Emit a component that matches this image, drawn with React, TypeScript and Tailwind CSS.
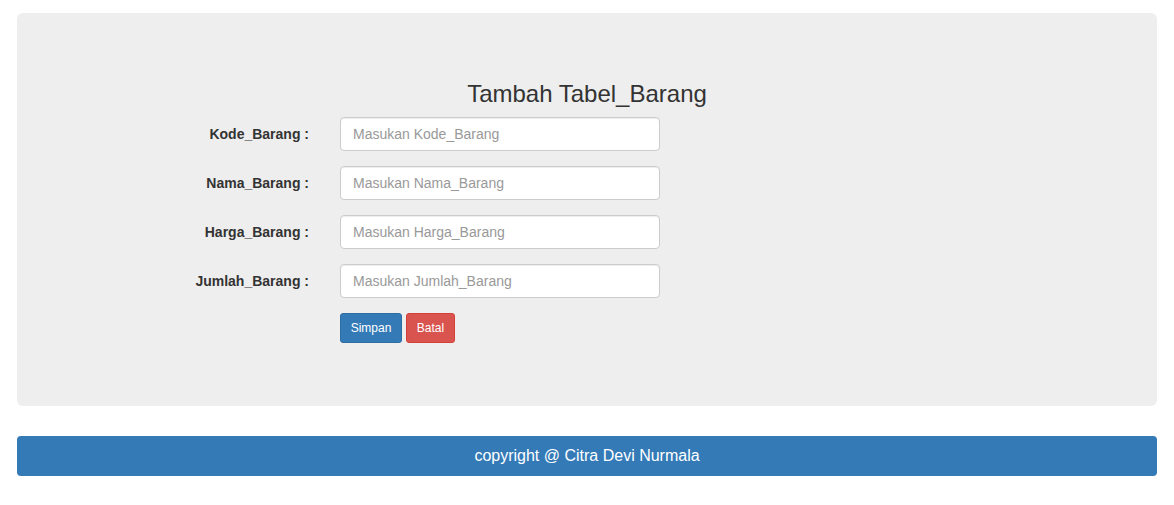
import { useState } from "react";

const fields = [
  { label: "Kode_Barang :", placeholder: "Masukan Kode_Barang" },
  { label: "Nama_Barang :", placeholder: "Masukan Nama_Barang" },
  { label: "Harga_Barang :", placeholder: "Masukan Harga_Barang" },
  { label: "Jumlah_Barang :", placeholder: "Masukan Jumlah_Barang" },
];

export default function App() {
  const [values, setValues] = useState<string[]>(["", "", "", ""]);

  return (
    <div
      className="min-h-screen bg-white px-[17px] pt-[13px] text-[14px] text-[#333]"
      style={{ fontFamily: '"Liberation Sans", Arial, sans-serif' }}
    >
      <div className="rounded-[6px] bg-[#eeeeee] pt-[68px] pb-[63px]">
        <h3 className="mb-[10px] text-center text-[24px] leading-[26px] font-normal text-[#333]">
          Tambah Tabel_Barang
        </h3>

        <form className="flex flex-col gap-[15px]" onSubmit={(e) => e.preventDefault()}>
          {fields.map((field, i) => (
            <div key={field.label} className="flex items-center">
              <label className="w-[292px] text-right font-bold leading-[20px]">
                {field.label}
              </label>
              <input
                type="text"
                value={values[i]}
                onChange={(e) => {
                  const next = [...values];
                  next[i] = e.target.value;
                  setValues(next);
                }}
                placeholder={field.placeholder}
                className="ml-[31px] h-[34px] w-[320px] rounded-[4px] border border-[#cccccc] bg-white px-[12px] text-[14px] text-[#555] shadow-[inset_0_1px_1px_rgba(0,0,0,0.075)] outline-none placeholder:text-[#999]"
              />
            </div>
          ))}

          <div className="flex gap-[4px] pl-[323px]">
            <button
              type="submit"
              className="h-[30px] w-[62px] rounded-[3px] border border-[#2e6da4] bg-[#337ab7] text-[12px] leading-[18px] text-white"
            >
              Simpan
            </button>
            <button
              type="button"
              className="h-[30px] w-[49px] rounded-[3px] border border-[#d43f3a] bg-[#d9534f] text-[12px] leading-[18px] text-white"
            >
              Batal
            </button>
          </div>
        </form>
      </div>

      <div className="mt-[30px] flex h-[40px] items-center justify-center rounded-[4px] bg-[#337ab7] text-[16px] text-white">
        copyright @ Citra Devi Nurmala
      </div>
    </div>
  );
}
